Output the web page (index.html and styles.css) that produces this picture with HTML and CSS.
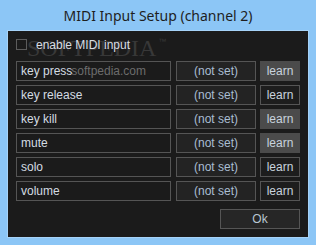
FILE: index.html
```html
<!DOCTYPE html>
<html lang="en">
<head>
<meta charset="UTF-8">
<title>MIDI Input Setup</title>
<link rel="stylesheet" href="styles.css">
</head>
<body>

<div class="window">
    <div class="titlebar">MIDI Input Setup (channel 2)</div>

    <div class="panel">
        <!-- watermark overlay -->
        <div class="wm-logo">SOFTPEDIA<span class="wm-tm">™</span></div>
        <div class="wm-url">.softpedia.com</div>

        <label class="enable">
            <span class="check"></span>
            <span>enable MIDI input</span>
        </label>

        <div class="rows">
            <div class="row">
                <div class="field name">key press</div>
                <div class="field value">(not set)</div>
                <div class="btn learn hot">learn</div>
            </div>
            <div class="row">
                <div class="field name">key release</div>
                <div class="field value">(not set)</div>
                <div class="btn learn">learn</div>
            </div>
            <div class="row">
                <div class="field name">key kill</div>
                <div class="field value">(not set)</div>
                <div class="btn learn hot">learn</div>
            </div>
            <div class="row">
                <div class="field name">mute</div>
                <div class="field value">(not set)</div>
                <div class="btn learn hot">learn</div>
            </div>
            <div class="row">
                <div class="field name">solo</div>
                <div class="field value">(not set)</div>
                <div class="btn learn">learn</div>
            </div>
            <div class="row">
                <div class="field name">volume</div>
                <div class="field value">(not set)</div>
                <div class="btn learn">learn</div>
            </div>
        </div>

        <div class="footer">
            <div class="btn ok">Ok</div>
        </div>
    </div>
</div>

</body>
</html>
```

FILE: styles.css
```css
body {
    margin: 0;
    font-family: "Liberation Sans", Arial, sans-serif;
}

.window {
    width: 316px;
    height: 245px;
    background-color: #8cc6f6;
    box-sizing: border-box;
    padding: 0 7px;
}

.titlebar {
    height: 30px;
    line-height: 31px;
    text-align: center;
    font-family: "Noto Sans", sans-serif;
    font-size: 14px;
    color: #1e1e1e;
}

.panel {
    position: relative;
    background-color: #1b1b1b;
    border: 1px solid #a6d3f8;
    padding: 8px 8px 0 8px;
    box-sizing: border-box;
    height: 208px;
}

/* checkbox line */
.enable {
    display: flex;
    align-items: center;
    height: 11px;
    margin-bottom: 11px;
    font-size: 12px;
    color: #d8dde3;
    position: relative;
    z-index: 2;
}

.check {
    width: 9px;
    height: 9px;
    border: 1px solid #5c5c5c;
    margin-right: 9px;
}

.rows {
    display: flex;
    flex-direction: column;
    gap: 4px;
}

.row {
    display: flex;
    height: 20px;
}

.field, .btn {
    box-sizing: border-box;
    height: 20px;
    line-height: 18px;
    font-size: 12px;
    border: 1px solid #555555;
}

.field.name {
    width: 155px;
    padding-left: 4px;
    color: #d4dbe3;
    position: relative;
    z-index: 2;
}

.field.value {
    width: 80px;
    margin-left: 5px;
    text-align: center;
    background-color: #232323;
    color: #a9bdd2;
}

.btn {
    text-align: center;
    color: #c9d3de;
    background-color: #1d1d1d;
}

.learn {
    width: 40px;
    margin-left: 4px;
}

.learn.hot {
    background-color: #4b4b4b;
    border-color: #4b4b4b;
}

.footer {
    display: flex;
    justify-content: flex-end;
    margin-top: 8px;
}

.ok {
    width: 80px;
    background-color: #262626;
    color: #b9c6d4;
}

/* watermark */
.wm-logo {
    position: absolute;
    left: 19px;
    top: 4px;
    font-family: "Liberation Serif", serif;
    font-size: 24px;
    color: #383838;
    pointer-events: none;
    z-index: 1;
}

.wm-tm {
    font-family: "Liberation Sans", sans-serif;
    font-size: 8px;
    vertical-align: 12px;
    margin-left: 2px;
}

.wm-url {
    position: absolute;
    left: 60px;
    top: 33px;
    font-size: 12px;
    color: #6c6c6c;
    z-index: 1;
    pointer-events: none;
}
```
